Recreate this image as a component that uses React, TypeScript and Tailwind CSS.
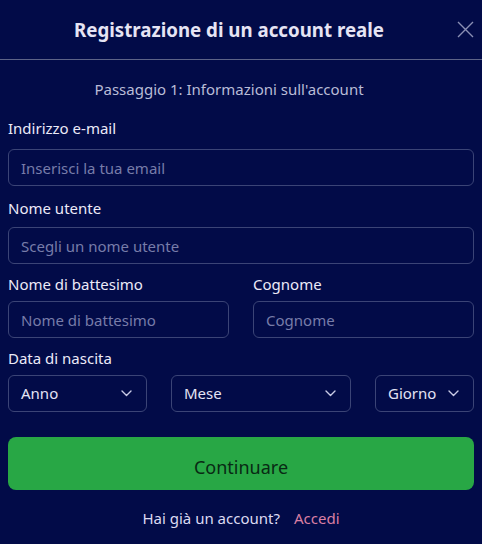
import React from 'react';

const font = { fontFamily: '"Noto Sans", "Open Sans", sans-serif' };

const Chevron: React.FC = () => (
  <svg width="11" height="7" viewBox="0 0 11 7" fill="none" className="shrink-0">
    <path d="M1 1l4.5 4.5L10 1" stroke="#c9cbe6" strokeWidth="1.4" strokeLinecap="round" strokeLinejoin="round" />
  </svg>
);

const Field: React.FC<{ label: string; placeholder: string; className?: string; gap: string }> = ({ label, placeholder, className, gap }) => (
  <div className={`flex flex-col ${className ?? ''}`}>
    <label className={`text-[15px] leading-5 text-[#eceaf8] ${gap}`}>{label}</label>
    <input
      placeholder={placeholder}
      className="h-[37px] w-full rounded-md border border-[#3b4476] bg-[#020b48] px-3 text-[15px] text-white placeholder:text-[#777ca9] outline-none"
    />
  </div>
);

const Select: React.FC<{ text: string; className: string }> = ({ text, className }) => (
  <div className={`h-[37px] flex items-center justify-between rounded-md border border-[#3b4476] pl-3 pr-[14px] ${className}`}>
    <span className="text-[15px] text-[#e4e3f4]">{text}</span>
    <Chevron />
  </div>
);

export default function App() {
  return (
    <div className="w-[482px] h-[544px] bg-[#020b48] overflow-hidden" style={font}>
      <div className="relative h-[60px] flex items-center justify-center pr-6 pt-[2px] border-b border-[#5d6387]">
        <h1 className="text-[18.7px] font-bold text-[#e6e4f4]">Registrazione di un account reale</h1>
        <button className="absolute right-[8px] top-[21px] text-[#8a8fb4]">
          <svg width="17" height="17" viewBox="0 0 17 17" fill="none">
            <path d="M1 1l15 15M16 1L1 16" stroke="currentColor" strokeWidth="1.4" />
          </svg>
        </button>
      </div>

      <div className="px-2">
        <p className="mt-[19px] pr-6 text-center text-[15px] leading-5 text-[#b9bcd7]">Passaggio 1: Informazioni sull'account</p>

        <Field className="mt-[19px]" gap="mb-[11px]" label="Indirizzo e-mail" placeholder="Inserisci la tua email" />
        <Field className="mt-[12px]" gap="mb-[9px]" label="Nome utente" placeholder="Scegli un nome utente" />

        <div className="mt-[10px] flex gap-6">
          <Field className="flex-1" gap="mb-[7px]" label="Nome di battesimo" placeholder="Nome di battesimo" />
          <Field className="flex-1" gap="mb-[7px]" label="Cognome" placeholder="Cognome" />
        </div>

        <div className="mt-[10px] flex flex-col">
          <span className="text-[15px] leading-5 text-[#eceaf8] mb-[7px]">Data di nascita</span>
          <div className="flex justify-between">
            <Select text="Anno" className="w-[139px]" />
            <Select text="Mese" className="w-[180px]" />
            <Select text="Giorno" className="w-[99px]" />
          </div>
        </div>

        <button className="mt-[25px] h-[53px] w-full rounded-lg bg-[#28a745] pt-[7px] text-[18px] text-[#082a14]">Continuare</button>

        <div className="mt-[17px] flex justify-center gap-[14px] text-[15px]">
          <span className="text-[#dcdaf2]">Hai già un account?</span>
          <span className="text-[#d97fa3]">Accedi</span>
        </div>
      </div>
    </div>
  );
}
